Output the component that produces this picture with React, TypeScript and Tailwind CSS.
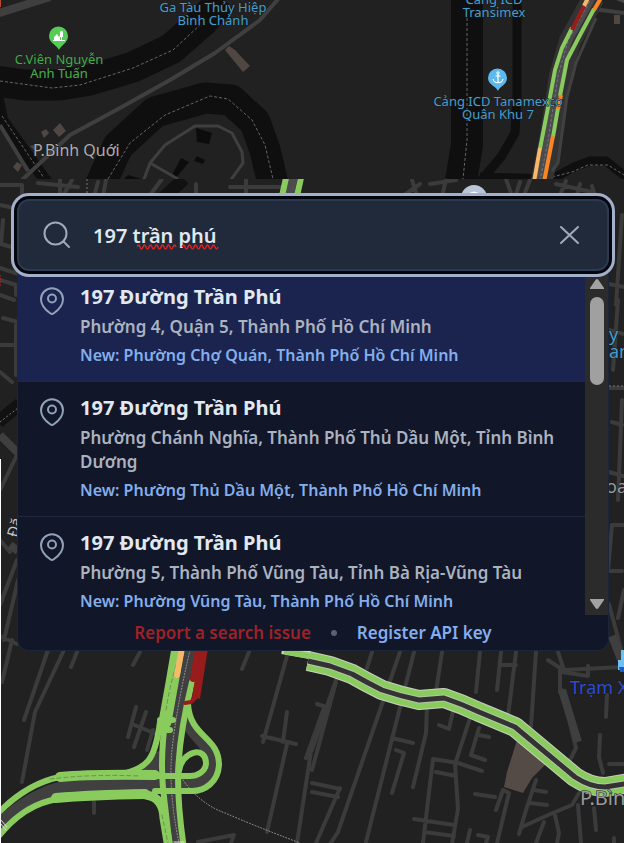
import { useState } from 'react';

const PLACES = [
    {
        name: '197 Đường Trần Phú',
        address: 'Phường 4, Quận 5, Thành Phố Hồ Chí Minh',
        updated: 'New: Phường Chợ Quán, Thành Phố Hồ Chí Minh',
    },
    {
        name: '197 Đường Trần Phú',
        address: 'Phường Chánh Nghĩa, Thành Phố Thủ Dầu Một, Tỉnh Bình Dương',
        updated: 'New: Phường Thủ Dầu Một, Thành Phố Hồ Chí Minh',
    },
    {
        name: '197 Đường Trần Phú',
        address: 'Phường 5, Thành Phố Vũng Tàu, Tỉnh Bà Rịa-Vũng Tàu',
        updated: 'New: Phường Vũng Tàu, Thành Phố Hồ Chí Minh',
    },
];

const UPPER_STREETS = 'M0 185h22v14 M38 183l40 4 M60 179v16 M72 180l-8 14 M98 182l-4 14 M106 180l-3 16 M162 179l-12 16 M196 184v14 M246 180v14 M230 187h60 M400 198l20-14 M412 180l6 18 M430 184l26-4 M446 180l-4 16 M506 179l6 17 M520 182l-5 15 M530 180l-6 15 M556 184l36 8 M566 181l-6 14 M580 184l-4 14 M592 186l4 14';

const SIDE_STREETS = 'M0 205l14 3 M3 220l-2 24 14 4 M0 268l18 6 M0 280l16 5v10 M0 295l14 5 M3 318l15 4 M16 325v50 M0 345h18 M0 372l12 10 M17 455L0 490 M17 560L0 605 M0 540l10 12 M18 580L4 640 M0 636l17 8 M622 215l-6 90 M609 284l15 3 M618 300l-5 70 M609 330l15 4 M609 388h15 M612 422l10 3 M622 400l-4 100 M609 472l14 4 M624 525l-12 0-4 46h14 M624 590l-6 28 M609 604l12 45';

const STREETS = 'M12 640L2 682 M48 650L24 720 M64 650L35 712 22 782 M77 652l-6 15 M140 652l-7 13 M136 707l-8 30 M146 712l-12 35 M132 724l24 10 M153 730l-6 20 M249 652l-7 17 M287 656l-24 86 M287 712l-4 30 M262 736l34 8 M287 744l-20 88 M313 738l-16 105 M324 708l-18 50 M94 801v12 M198 842l36-7-3 8 M336 680l-24 70 M317 704l12 4 M372 652l-5 16 M336 682l-24 88 M400 652l-62 180-8 12 M414 652l-48 190 M442 652l-6 40 M427 705l-1 28-13 54 M392 738l21 5 M396 750l8 3-12 40 M439 725l10 4 4-18 M480 652l-4 40 M473 709l-18 55 3 45-6 35 M433 759l25 4 24 8 M433 759l-10 84 M436 772l20 4 M414 819l40 6 M424 832l30 4 M479 728l-8 27 14 5 M479 735l10 2 M501 652l-4 38 M501 665h15 M516 652l-8 64 M536 652l-5 74 M558 652l6 18 58-3 M562 672l26 4v-10 M562 690l14 58-6 12 M548 660l12 8v24 M607 695l-1 22 M600 735l-1 22 4 16 M609 764h15 M475 794l20 3 M496 810l7-20 6 3-12 50 M536 780l-10 30-7 24 M534 790l12 2 M530 803l17 2 M522 827l26-12 24-10 7-12 M555 815l4 18-2 10 M578 805l3 38 M594 808l2 22 M544 822l-8 21 M470 830l-3 13 M478 835l10 2-2 6 M614 838v5 M312 783l28 6 M312 792l26 5 M340 788l-24 55';

const ROUTE = 'M308 661L330 666 352 674Q366 682 382 690 400 696 419 700L444 698Q462 704 479 712L515 727 545 752 575 777Q590 787 605 787L630 783';

function CityMap() {
    return (
        <svg
            className="absolute inset-0 w-full h-full"
            viewBox="0 0 624 843"
            preserveAspectRatio="xMidYMin slice"
            fill="none"
            aria-hidden="true"
        >
            <defs>
                <clipPath id="north"><path d="M0 0h624v179H0z" /></clipPath>
                <clipPath id="south"><path d="M0 179h624v664H0z" /></clipPath>
            </defs>
            <path fill="#212121" d="M0 0h624v843H0z" />

            <g clipPath="url(#north)">
                {/* waterways */}
                <g stroke="#0f0f0f" strokeLinejoin="round">
                    <path strokeWidth="31" d="M-5 81l30 4 35 0 30-5 43-13 38-18 32-28 20-22 M98 190l20-44 37-34 50-14 26 2 24 22 10 28 10 42" />
                    <path strokeWidth="32" d="M467 0v145l-6 36" />
                    <path strokeWidth="12" d="M-3 95l5 25 46 64" />
                    <path strokeWidth="9" d="M517 0v95l-2 38-14 24-22 26 M480 177l72 2 22-12 16-6 16 0 20 16" />
                </g>
                <path
                    stroke="#8a8a8a"
                    strokeDasharray="3 2"
                    strokeWidth=".7"
                    d="M0 81l30 4 22 3 28-3 53-17 40-18 27-25 M108 179l22-36 35-28 45-19 18 3 24 21 13 25 8 34 M467 18v122l-4 39 M2 116l42 62 M552 177l20-5 16-7h20l16 10"
                />
                <path fill="#0c0c0c" d="M196 128l16 5-3 11-12-2z M181 158l8 4-13 16-4-3z M197 156l8 4-2 4-9-3z M128 175l14 4h-18z" />

                {/* roads */}
                <g stroke="#3f3f3f" strokeLinejoin="round">
                    <path strokeWidth="8" d="M-4 14L50-3" />
                    <path strokeWidth="4" d="M279-2l-19 22-45 33-45 27-50 28-50 27-48 45 M0 125l28 46 M594 9l30 4" />
                    <path strokeWidth="3" d="M143 182l7-19 15-18 30-19h23l14 7 10 19 1 11-13 18 M150 163l28 16" />
                </g>
                <path fill="#504743" d="M225 50l4-4 6 4 15 16-7 6z M53 130l7-7 6 8-7 6z M41 132l5-3 3 4-5 5z M30 146l8-2-2 8z M13 167l4-5 5 3-4 7z M614 15h6v9h-6z M616 0h8v3z" />
                <path stroke="#333" strokeWidth="22" d="M594-3l-24 44-10 35-10 65-9 44" />
                <path stroke="#4b4b4d" strokeWidth="8" d="M592-3l-24 44-10 35-10 65-9 44" />
                <path stroke="#788098" strokeDasharray="3 2" strokeWidth=".8" d="M592-3l-24 44-10 35-10 65-9 44" />
                <path stroke="#414141" strokeWidth="3" d="M596 18l-20 45-9 34-9 66-6 8" />

                {/* traffic */}
                <g strokeWidth="4">
                    <path stroke="#8acb5e" d="M572 28l-10 20-7 22-5 27-10 52 M594 9l-15 28-12 23-7 36 M558 108l-5 29" />
                    <path stroke="#f7b968" d="M588-2l-4 8 M540 148l-6 34" />
                    <path stroke="#991c1c" d="M584 6l-12 24" />
                    <path stroke="#f98524" d="M601-2l-7 12 M561 95l-3 14 M553 136l-9 46" />
                </g>
                <path stroke="#b84a32" strokeWidth="2" d="M0 0v7" />
            </g>

            <g clipPath="url(#south)">
                <g stroke="#3b3b3b" strokeWidth="4" strokeLinecap="round" strokeLinejoin="round">
                    <path d={UPPER_STREETS} />
                    <path d={SIDE_STREETS} />
                    <path d={STREETS} />
                </g>
                <path stroke="#3f3f3f" strokeWidth="8" d="M612 636l10 26 M0 435l18 18 M562 690l16 52 M10 545l8 6" />
                <path stroke="#111" strokeWidth="13" d="M184 179l-22 20 M-2 422l22-18" />
                <path stroke="#777" strokeDasharray="2 2" d="M87 179v16 M0 422l18-14 M609 386h15" />
                <path stroke="#4c4c4e" strokeWidth="9" d="M293 178l-4 20" />
                <path stroke="#8acb5e" strokeWidth="6" d="M286 178l-4 18 M301 178l-4 18" />
                <path fill="#544a46" d="M517 740l31 22-16 16-9 15-19-6 3-15z" />

                {/* interchange */}
                <g strokeLinejoin="round" strokeLinecap="round">
                    <path stroke="#404040" strokeWidth="14" d="M190 648Q176 710 171 750T178 848 M188 722C196 738 212 744 211 762S196 784 188 784L80 785Q40 788 0 824 M150 770l10-12" />
                    <path stroke="#8acb5e" strokeWidth="13" d="M178 648Q172 684 165 722" />
                    <g stroke="#8acb5e" strokeWidth="6">
                        <path d="M166 715Q160 755 163 788 166 815 170 848" />
                        <path d="M192 682Q179 735 178 775 178 810 184 848" />
                        <path d="M188 704C190 738 219 736 219 765 218 782 205 791 192 791H155" />
                        <path d="M179 771C181 752 206 744 206 764 205 772 197 776 190 776H150" />
                        <path d="M160 722Q156 752 148 761T122 774 M160 720h13 M160 730h10" />
                        <path d="M60 777Q28 783-2 813 M58 799Q24 804-2 837" />
                    </g>
                    <path stroke="#8acb5e" strokeWidth="10" d="M60 777Q90 774 155 775 M56 798Q90 795 145 794" />
                    <path stroke="#8acb5e" strokeWidth="9" d="M146 795Q163 797 164 818L169 848" />
                    <path stroke="#5f8548" strokeDasharray="4 3" strokeWidth=".8" d="M176 665Q169 690 166 710 M162 815l6 28 M50 779Q90 774 140 776" />
                    <path stroke="#f7b968" strokeWidth="6" d="M182 648l-5 27" />
                    <path stroke="#991c1c" strokeLinecap="butt" strokeWidth="8" d="M204 648l-8 50" />
                    <path stroke="#991c1c" strokeWidth="6" d="M198 648l-5 31" />
                    <path stroke="#991c1c" strokeWidth="4" d="M197 696l-6 6-6 1" />
                    <path stroke="#b4b4b8" strokeDasharray="1 2" strokeWidth=".8" d="M190 650Q176 710 172 750T179 843 M183 780Q200 804 225 813 255 826 300 843" />
                    <path stroke="#e5e5e5" d="M0 819l7 8 M0 823l6 7 M174 842h10" />
                </g>

                {/* arterial road */}
                <g strokeLinejoin="round">
                    <path stroke="#ccd6c4" strokeWidth="8" d="M282 650l28 5" />
                    <path stroke="#8acb5e" strokeWidth="6" d="M284 651l26 5" />
                    <path stroke="#c9cfc2" strokeWidth="20" d={ROUTE} />
                    <path stroke="#8acb5e" strokeWidth="18" d={ROUTE} />
                    <path stroke="#b5c5a8" strokeWidth="7" d={ROUTE} />
                    <path stroke="#333" strokeWidth="5" d={ROUTE} />
                </g>
                <path stroke="#d22" strokeDasharray="2 1" d="M0 275v12" />
                <path fill="#fff" d="M0 459h1v384H0z" />
            </g>

            {/* markers */}
            <path fill="#54cc56" d="M59 50c-2-5-10-7-10-14a9.500 9.500 0 0 1 19 0c0 7-7 9-9 14z" />
            <path fill="#fff" d="M53 40h12v1H53z M54 37l3-3 2 3 1-1v4h-6z M60 33c0-3 3-3 3 0v4h-1v3h-1v-3h-1z" />
            <path fill="#5eb8ee" d="M498 91c-2-5-10-6-10-13a9.500 9.500 0 0 1 19 0c0 7-7 8-9 13z" />
            <path stroke="#fff" strokeWidth="1.200" d="M498 74v9 M495.500 76h5 M493 79c1 5 9 5 10 0" />
            <circle cx="498" cy="73" r="1.200" stroke="#fff" />
            <circle cx="474" cy="198" r="13" fill="#b9c6d8" />
            <path fill="#fff" d="M467 195q7-7 14 0z" />
            <path fill="#6fc0f5" d="M621 650h3v20h-6v-10h3z" />
            <path fill="#1c5fc4" d="M619 667h5v5h-4z" />

            <g fontFamily="'Noto Sans', sans-serif" fontSize="13" textAnchor="middle" stroke="#1b1b1b" strokeWidth="1" paintOrder="stroke">
                <g fill="#41ad48">
                    <text x="59" y="64">C.Viên Nguyễn</text>
                    <text x="59" y="78">Anh Tuấn</text>
                </g>
                <g fill="#459dcd">
                    <text x="213" y="12">Ga Tàu Thủy Hiệp</text>
                    <text x="213" y="25">Bình Chánh</text>
                    <text x="494" y="4">Cảng ICD</text>
                    <text x="494" y="17">Transimex</text>
                    <text x="498" y="106">Cảng ICD Tanamexco</text>
                    <text x="498" y="119">Quân Khu 7</text>
                </g>
                <g textAnchor="start" fontSize="18">
                    <text x="33" y="156" fontSize="16" fill="#acacac">P.Bình Quới</text>
                    <text x="609" y="341" fill="#459dcd">y</text>
                    <text x="609" y="358" fill="#459dcd">an</text>
                    <text x="606" y="493" fill="#96989f">oa</text>
                    <text x="570" y="694" fill="#2c4bd0">Trạm X</text>
                    <text x="580" y="805" fontSize="20" fill="#9b9b9b">P.Bình</text>
                    <text x="0" y="0" fontSize="15" fill="#c8c8c8" transform="translate(17 538) rotate(-75)">Đă</text>
                </g>
            </g>
        </svg>
    );
}

function PinIcon() {
    return (
        <svg className="w-6 h-7 shrink-0 text-slate-400" viewBox="0 0 24 28" fill="none" stroke="currentColor" strokeWidth="2" strokeLinejoin="round" aria-hidden="true">
            <path d="M23 12.200C23 18 19 22.500 13.800 26.300Q12 27.600 10.200 26.300C5 22.500 1 18 1 12.200a11 11 0 0 1 22 0z" />
            <circle cx="12" cy="11.500" r="4" />
        </svg>
    );
}

export default function App() {
    const [query, setQuery] = useState('197 trần phú');
    const [active, setActive] = useState(0);

    return (
        <div className="relative min-h-screen overflow-hidden bg-[#212121] font-['Noto_Sans',sans-serif]">
            <CityMap />

            <main className="relative pt-[199px] pl-[17px] pr-[15px]">
                <form
                    role="search"
                    onSubmit={(e) => e.preventDefault()}
                    className="relative z-10 flex items-center h-[72px] pl-6 pr-[22px] rounded-xl border-2 border-[#2b3a50] bg-[#212a3a] shadow-[0_0_0_3px_#03050d,0_0_0_6px_#a3b0cb]"
                >
                    <svg className="w-7 h-7 shrink-0 text-[#a0aabb]" viewBox="0 0 28 28" fill="none" stroke="currentColor" strokeWidth="2" strokeLinecap="round" aria-hidden="true">
                        <circle cx="12.500" cy="12.500" r="11" />
                        <path d="M20.500 20.500l5.500 5.500" />
                    </svg>
                    <div className="relative flex-1 ml-[22px]">
                        <input
                            type="text"
                            aria-label="Search address"
                            spellCheck={false}
                            value={query}
                            onChange={(e) => setQuery(e.target.value)}
                            className="w-full h-10 bg-transparent text-xl font-semibold text-slate-200 outline-none"
                        />
                        {query === '197 trần phú' && (
                            <svg className="absolute left-11 bottom-1 w-[84px] h-2 pointer-events-none" viewBox="0 0 84 8" fill="none" stroke="#e02222" strokeWidth="1.500" aria-hidden="true">
                                <path d="M0 4q1.500-4 3 0t3 0 3 0 3 0 3 0 3 0 3 0 3 0 3 0 3 0 3 0 3 0 3 0 M45 4q1.500-4 3 0t3 0 3 0 3 0 3 0 3 0 3 0 3 0 3 0 3 0 3 0 3 0" />
                            </svg>
                        )}
                    </div>
                    <button type="button" aria-label="Clear" onClick={() => setQuery('')} className="p-1 text-[#a0aabb]">
                        <svg className="w-6 h-6" viewBox="0 0 24 24" fill="none" stroke="currentColor" strokeWidth="2" strokeLinecap="round" aria-hidden="true">
                            <path d="M4 4l17 16M21 4L4 20" />
                        </svg>
                    </button>
                </form>

                <section className="rounded-b-xl border-x border-b border-[#1b2639] bg-[#111628] overflow-hidden">
                    <div className="flex h-[344px]">
                        <ul className="flex-1 min-w-0 overflow-hidden">
                            {PLACES.map((place, i) => (
                                <li key={place.updated} className="border-b border-[#1d283b]">
                                    <button
                                        type="button"
                                        onClick={() => setActive(i)}
                                        className={`flex w-full items-start gap-4 pl-[22px] pr-5 pt-3 pb-3.5 text-left ${i === active ? 'bg-[#1a244e]' : ''}`}
                                    >
                                        <span className="pt-1"><PinIcon /></span>
                                        <span className="flex flex-col gap-1">
                                            <span className="text-xl leading-7 font-bold text-slate-200">{place.name}</span>
                                            <span className="text-[17px] leading-6 font-semibold text-[#abb2c0]">{place.address}</span>
                                            <span className="text-base leading-6 font-semibold text-[#84aeec]">{place.updated}</span>
                                        </span>
                                    </button>
                                </li>
                            ))}
                        </ul>
                        {/* scrollbar */}
                        <div className="flex flex-col items-center justify-between w-[23px] pt-2 pb-1.5 bg-[#2b2b2b]" aria-hidden="true">
                            <div className="flex flex-col items-center gap-2">
                                <svg className="w-3.5 h-2.5" viewBox="0 0 14 10" fill="#a2a2a2"><path d="M5.500 1q1.500-2 3 0L14 9v1H0V9z" /></svg>
                                <div className="w-3.5 h-22 rounded-full bg-[#a0a0a0]" />
                            </div>
                            <svg className="w-3.5 h-2.5" viewBox="0 0 14 10" fill="#a2a2a2"><path d="M5.500 9q1.500 2 3 0L14 1V0H0v1z" /></svg>
                        </div>
                    </div>
                    <footer className="flex items-center justify-center gap-5 h-[35px] text-[17px] font-semibold">
                        <a href="#report" className="text-[#9d2228]">Report a search issue</a>
                        <span className="w-1.5 h-1.5 rounded-full bg-[#5a6272]" />
                        <a href="#register" className="text-[#84aeec]">Register API key</a>
                    </footer>
                </section>
            </main>
        </div>
    );
}
